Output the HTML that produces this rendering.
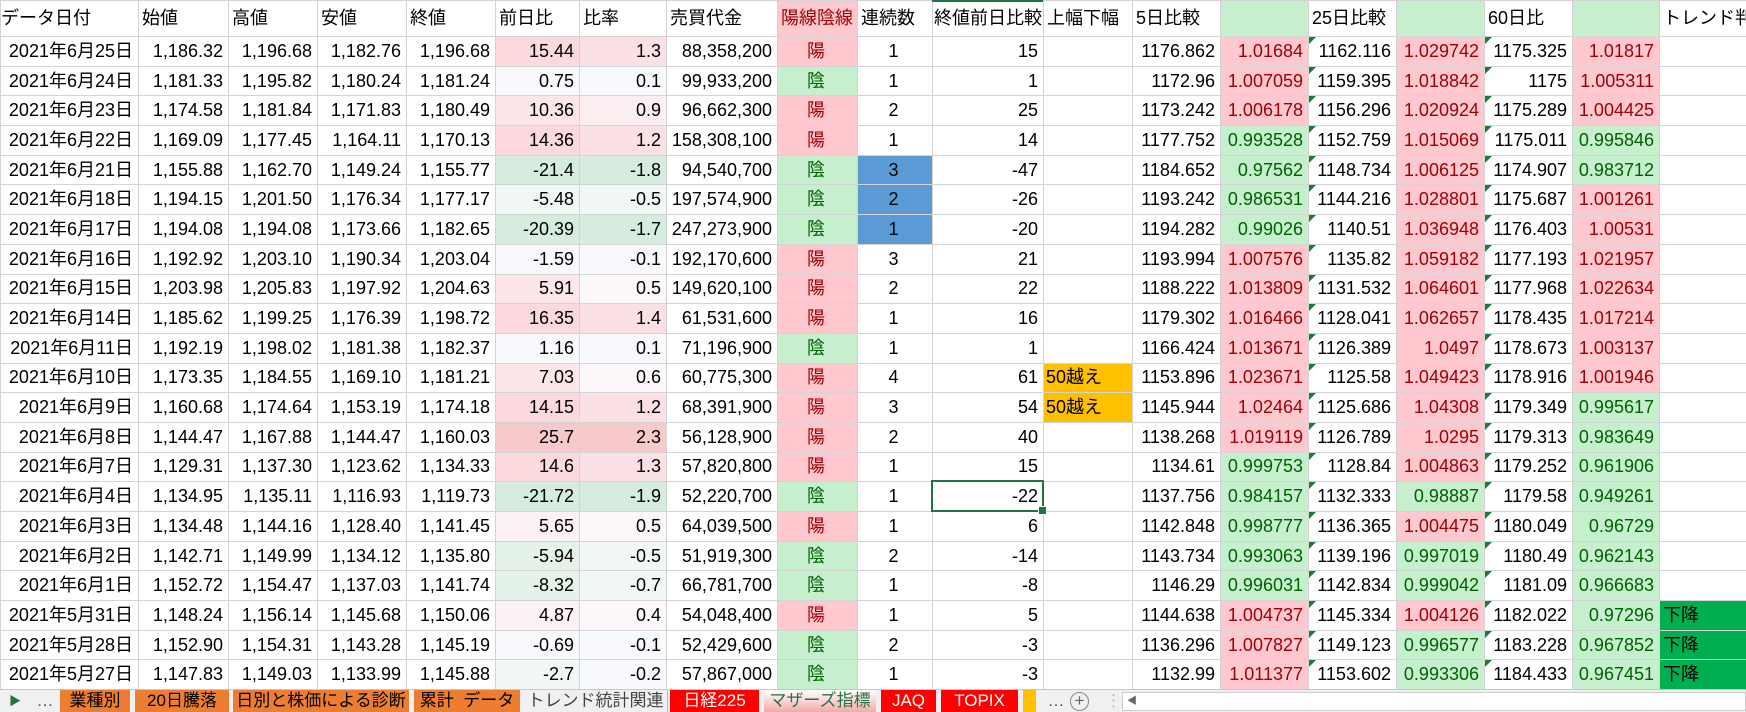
<!DOCTYPE html>
<html><head><meta charset="utf-8">
<style>
*{margin:0;padding:0;box-sizing:border-box}
body{width:1746px;height:712px;overflow:hidden;background:#fff;font-family:"Liberation Sans","Noto Sans CJK JP",sans-serif;position:relative}
table{border-collapse:collapse;table-layout:fixed;position:absolute;left:0;top:0;width:1746px}
td{border:1px solid #d4d4d4;height:29.7px;font-size:18px;white-space:nowrap;overflow:hidden;text-align:right;padding:0 5px 0 2px;color:#000;line-height:27px;position:relative}
tr.h td{height:36px;text-align:left;padding-left:3px}
td.c{text-align:center}
.pk{background:#ffc7ce;color:#9c0006}
.gn{background:#c6efce;color:#006100}
.bl{background:#5b9bd5}
.or{background:#ffc000;text-align:left}
.tr{background:#00b050;text-align:left;padding-left:3px}
.p0{background:#fcf2f5}.p1{background:#fce6ea}.p2{background:#fbd9dd}.p3{background:#f8c9cb}
.q0{background:#fbf7fa}.q1{background:#fdeef1}.q2{background:#fbe1e5}
.n0{background:#f1f7f5}.n1{background:#e5f2ea}.n2{background:#d6ecdf}
.w{background:#f8f9fc}
.t::before{content:"";position:absolute;left:0;top:0;border-top:7px solid #1e7b34;border-right:7px solid transparent}
#sel{position:absolute;left:931px;top:480px;width:113px;height:32px;border:2px solid #217346}
#sel::after{content:"";position:absolute;right:-5px;bottom:-5px;width:7px;height:7px;background:#217346;border:1px solid #fff}
#hl{position:absolute;left:932px;top:0;width:111px;height:2px;background:#217346}
#tabs{position:absolute;left:0;top:689px;width:1746px;height:23px;background:#f0f0f0;border-top:1px solid #c8c8c8;font-size:17px}
.tab{position:absolute;top:0;height:22px;line-height:22px;text-align:center;color:#000}
.o{background:#ed7d31}.rd{background:#ff0000;color:#fff}
</style></head><body>
<table>
<colgroup><col style="width:138px"><col style="width:90px"><col style="width:89px"><col style="width:89px"><col style="width:89px"><col style="width:84px"><col style="width:87px"><col style="width:111px"><col style="width:80px"><col style="width:75px"><col style="width:111px"><col style="width:89px"><col style="width:88px"><col style="width:88px"><col style="width:88px"><col style="width:88px"><col style="width:88px"><col style="width:87px"><col style="width:87px"></colgroup>
<tr class="h"><td style="padding-left:0">データ日付</td><td>始値</td><td>高値</td><td>安値</td><td>終値</td><td>前日比</td><td>比率</td><td>売買代金</td><td class="pk">陽線陰線</td><td>連続数</td><td style="padding-left:1px">終値前日比較</td><td>上幅下幅</td><td>5日比較</td><td class="gn"></td><td>25日比較</td><td class="gn"></td><td>60日比</td><td class="gn"></td><td>トレンド判</td></tr>
<tr><td>2021年6月25日</td><td>1,186.32</td><td>1,196.68</td><td>1,182.76</td><td>1,196.68</td><td class="p2">15.44</td><td class="q2">1.3</td><td>88,358,200</td><td class="c pk">陽</td><td class="c">1</td><td>15</td><td></td><td>1176.862</td><td class="pk">1.01684</td><td class="t">1162.116</td><td class="pk">1.029742</td><td class="t">1175.325</td><td class="pk">1.01817</td><td></td></tr>
<tr><td>2021年6月24日</td><td>1,181.33</td><td>1,195.82</td><td>1,180.24</td><td>1,181.24</td><td class="w">0.75</td><td class="w">0.1</td><td>99,933,200</td><td class="c gn">陰</td><td class="c">1</td><td>1</td><td></td><td>1172.96</td><td class="pk">1.007059</td><td class="t">1159.395</td><td class="pk">1.018842</td><td class="t">1175</td><td class="pk">1.005311</td><td></td></tr>
<tr><td>2021年6月23日</td><td>1,174.58</td><td>1,181.84</td><td>1,171.83</td><td>1,180.49</td><td class="p1">10.36</td><td class="q1">0.9</td><td>96,662,300</td><td class="c pk">陽</td><td class="c">2</td><td>25</td><td></td><td>1173.242</td><td class="pk">1.006178</td><td class="t">1156.296</td><td class="pk">1.020924</td><td class="t">1175.289</td><td class="pk">1.004425</td><td></td></tr>
<tr><td>2021年6月22日</td><td>1,169.09</td><td>1,177.45</td><td>1,164.11</td><td>1,170.13</td><td class="p2">14.36</td><td class="q2">1.2</td><td>158,308,100</td><td class="c pk">陽</td><td class="c">1</td><td>14</td><td></td><td>1177.752</td><td class="gn">0.993528</td><td class="t">1152.759</td><td class="pk">1.015069</td><td class="t">1175.011</td><td class="gn">0.995846</td><td></td></tr>
<tr><td>2021年6月21日</td><td>1,155.88</td><td>1,162.70</td><td>1,149.24</td><td>1,155.77</td><td class="n2">-21.4</td><td class="n2">-1.8</td><td>94,540,700</td><td class="c gn">陰</td><td class="c bl">3</td><td>-47</td><td></td><td>1184.652</td><td class="gn">0.97562</td><td class="t">1148.734</td><td class="pk">1.006125</td><td class="t">1174.907</td><td class="gn">0.983712</td><td></td></tr>
<tr><td>2021年6月18日</td><td>1,194.15</td><td>1,201.50</td><td>1,176.34</td><td>1,177.17</td><td class="n0">-5.48</td><td class="n0">-0.5</td><td>197,574,900</td><td class="c gn">陰</td><td class="c bl">2</td><td>-26</td><td></td><td>1193.242</td><td class="gn">0.986531</td><td class="t">1144.216</td><td class="pk">1.028801</td><td class="t">1175.687</td><td class="pk">1.001261</td><td></td></tr>
<tr><td>2021年6月17日</td><td>1,194.08</td><td>1,194.08</td><td>1,173.66</td><td>1,182.65</td><td class="n2">-20.39</td><td class="n2">-1.7</td><td>247,273,900</td><td class="c gn">陰</td><td class="c bl">1</td><td>-20</td><td></td><td>1194.282</td><td class="gn">0.99026</td><td class="t">1140.51</td><td class="pk">1.036948</td><td class="t">1176.403</td><td class="pk">1.00531</td><td></td></tr>
<tr><td>2021年6月16日</td><td>1,192.92</td><td>1,203.10</td><td>1,190.34</td><td>1,203.04</td><td class="w">-1.59</td><td class="w">-0.1</td><td>192,170,600</td><td class="c pk">陽</td><td class="c">3</td><td>21</td><td></td><td>1193.994</td><td class="pk">1.007576</td><td class="t">1135.82</td><td class="pk">1.059182</td><td class="t">1177.193</td><td class="pk">1.021957</td><td></td></tr>
<tr><td>2021年6月15日</td><td>1,203.98</td><td>1,205.83</td><td>1,197.92</td><td>1,204.63</td><td class="p1">5.91</td><td class="q0">0.5</td><td>149,620,100</td><td class="c pk">陽</td><td class="c">2</td><td>22</td><td></td><td>1188.222</td><td class="pk">1.013809</td><td class="t">1131.532</td><td class="pk">1.064601</td><td class="t">1177.968</td><td class="pk">1.022634</td><td></td></tr>
<tr><td>2021年6月14日</td><td>1,185.62</td><td>1,199.25</td><td>1,176.39</td><td>1,198.72</td><td class="p2">16.35</td><td class="q2">1.4</td><td>61,531,600</td><td class="c pk">陽</td><td class="c">1</td><td>16</td><td></td><td>1179.302</td><td class="pk">1.016466</td><td class="t">1128.041</td><td class="pk">1.062657</td><td class="t">1178.435</td><td class="pk">1.017214</td><td></td></tr>
<tr><td>2021年6月11日</td><td>1,192.19</td><td>1,198.02</td><td>1,181.38</td><td>1,182.37</td><td class="w">1.16</td><td class="w">0.1</td><td>71,196,900</td><td class="c gn">陰</td><td class="c">1</td><td>1</td><td></td><td>1166.424</td><td class="pk">1.013671</td><td class="t">1126.389</td><td class="pk">1.0497</td><td class="t">1178.673</td><td class="pk">1.003137</td><td></td></tr>
<tr><td>2021年6月10日</td><td>1,173.35</td><td>1,184.55</td><td>1,169.10</td><td>1,181.21</td><td class="p1">7.03</td><td class="q0">0.6</td><td>60,775,300</td><td class="c pk">陽</td><td class="c">4</td><td>61</td><td class="or">50越え</td><td>1153.896</td><td class="pk">1.023671</td><td class="t">1125.58</td><td class="pk">1.049423</td><td class="t">1178.916</td><td class="pk">1.001946</td><td></td></tr>
<tr><td>2021年6月9日</td><td>1,160.68</td><td>1,174.64</td><td>1,153.19</td><td>1,174.18</td><td class="p2">14.15</td><td class="q2">1.2</td><td>68,391,900</td><td class="c pk">陽</td><td class="c">3</td><td>54</td><td class="or">50越え</td><td>1145.944</td><td class="pk">1.02464</td><td class="t">1125.686</td><td class="pk">1.04308</td><td class="t">1179.349</td><td class="gn">0.995617</td><td></td></tr>
<tr><td>2021年6月8日</td><td>1,144.47</td><td>1,167.88</td><td>1,144.47</td><td>1,160.03</td><td class="p3">25.7</td><td class="p3">2.3</td><td>56,128,900</td><td class="c pk">陽</td><td class="c">2</td><td>40</td><td></td><td>1138.268</td><td class="pk">1.019119</td><td class="t">1126.789</td><td class="pk">1.0295</td><td class="t">1179.313</td><td class="gn">0.983649</td><td></td></tr>
<tr><td>2021年6月7日</td><td>1,129.31</td><td>1,137.30</td><td>1,123.62</td><td>1,134.33</td><td class="p2">14.6</td><td class="q2">1.3</td><td>57,820,800</td><td class="c pk">陽</td><td class="c">1</td><td>15</td><td></td><td>1134.61</td><td class="gn">0.999753</td><td class="t">1128.84</td><td class="pk">1.004863</td><td class="t">1179.252</td><td class="gn">0.961906</td><td></td></tr>
<tr><td>2021年6月4日</td><td>1,134.95</td><td>1,135.11</td><td>1,116.93</td><td>1,119.73</td><td class="n2">-21.72</td><td class="n2">-1.9</td><td>52,220,700</td><td class="c gn">陰</td><td class="c">1</td><td>-22</td><td></td><td>1137.756</td><td class="gn">0.984157</td><td class="t">1132.333</td><td class="gn">0.98887</td><td class="t">1179.58</td><td class="gn">0.949261</td><td></td></tr>
<tr><td>2021年6月3日</td><td>1,134.48</td><td>1,144.16</td><td>1,128.40</td><td>1,141.45</td><td class="p0">5.65</td><td class="q0">0.5</td><td>64,039,500</td><td class="c pk">陽</td><td class="c">1</td><td>6</td><td></td><td>1142.848</td><td class="gn">0.998777</td><td class="t">1136.365</td><td class="pk">1.004475</td><td class="t">1180.049</td><td class="gn">0.96729</td><td></td></tr>
<tr><td>2021年6月2日</td><td>1,142.71</td><td>1,149.99</td><td>1,134.12</td><td>1,135.80</td><td class="n1">-5.94</td><td class="n0">-0.5</td><td>51,919,300</td><td class="c gn">陰</td><td class="c">2</td><td>-14</td><td></td><td>1143.734</td><td class="gn">0.993063</td><td class="t">1139.196</td><td class="gn">0.997019</td><td class="t">1180.49</td><td class="gn">0.962143</td><td></td></tr>
<tr><td>2021年6月1日</td><td>1,152.72</td><td>1,154.47</td><td>1,137.03</td><td>1,141.74</td><td class="n1">-8.32</td><td class="n0">-0.7</td><td>66,781,700</td><td class="c gn">陰</td><td class="c">1</td><td>-8</td><td></td><td>1146.29</td><td class="gn">0.996031</td><td class="t">1142.834</td><td class="gn">0.999042</td><td class="t">1181.09</td><td class="gn">0.966683</td><td></td></tr>
<tr><td>2021年5月31日</td><td>1,148.24</td><td>1,156.14</td><td>1,145.68</td><td>1,150.06</td><td class="p0">4.87</td><td class="q0">0.4</td><td>54,048,400</td><td class="c pk">陽</td><td class="c">1</td><td>5</td><td></td><td>1144.638</td><td class="pk">1.004737</td><td class="t">1145.334</td><td class="pk">1.004126</td><td class="t">1182.022</td><td class="gn">0.97296</td><td class="tr">下降</td></tr>
<tr><td>2021年5月28日</td><td>1,152.90</td><td>1,154.31</td><td>1,143.28</td><td>1,145.19</td><td class="w">-0.69</td><td class="w">-0.1</td><td>52,429,600</td><td class="c gn">陰</td><td class="c">2</td><td>-3</td><td></td><td>1136.296</td><td class="pk">1.007827</td><td class="t">1149.123</td><td class="gn">0.996577</td><td class="t">1183.228</td><td class="gn">0.967852</td><td class="tr">下降</td></tr>
<tr><td>2021年5月27日</td><td>1,147.83</td><td>1,149.03</td><td>1,133.99</td><td>1,145.88</td><td class="n0">-2.7</td><td class="w">-0.2</td><td>57,867,000</td><td class="c gn">陰</td><td class="c">1</td><td>-3</td><td></td><td>1132.99</td><td class="pk">1.011377</td><td class="t">1153.602</td><td class="gn">0.993306</td><td class="t">1184.433</td><td class="gn">0.967451</td><td class="tr">下降</td></tr>
</table>
<div id="hl"></div>
<div id="sel"></div>
<div id="tabs">
<div class="tab" style="left:8px;width:14px;color:#217346;font-size:12px">&#9654;</div>
<div class="tab" style="left:34px;width:22px;color:#217346">…</div>
<div class="tab o" style="left:60px;width:70px">業種別</div>
<div class="tab o" style="left:135px;width:94px">20日騰落</div>
<div class="tab o" style="left:233px;width:176px">日別と株価による診断</div>
<div class="tab o" style="left:414px;width:106px">累計&nbsp;&nbsp;データ</div>
<div class="tab" style="left:524px;width:144px;color:#444;border-right:1px solid #bbb">トレンド統計関連</div>
<div class="tab rd" style="left:670px;width:89px">日経225</div>
<div class="tab" style="left:764px;width:112px;background:linear-gradient(#fff,#f4a9a9);color:#217346">マザーズ指標</div>
<div class="tab rd" style="left:881px;width:55px">JAQ</div>
<div class="tab rd" style="left:941px;width:77px">TOPIX</div>
<div class="tab" style="left:1023px;width:13px;background:#ffc000"></div>
<div class="tab" style="left:1044px;width:24px;color:#217346">…</div>
<div class="tab" style="left:1070px;top:2px;width:19px;height:19px;line-height:16px;border:1px solid #888;border-radius:50%;color:#666">+</div>
<div class="tab" style="left:1105px;width:3px;color:#bbb">⋮</div>
<div class="tab" style="left:1122px;top:2px;width:624px;height:19px;background:#fff;border:1px solid #ccc;text-align:left;font-size:10px;color:#666;padding-left:4px;line-height:17px">◀</div>
</div>
</body></html>
